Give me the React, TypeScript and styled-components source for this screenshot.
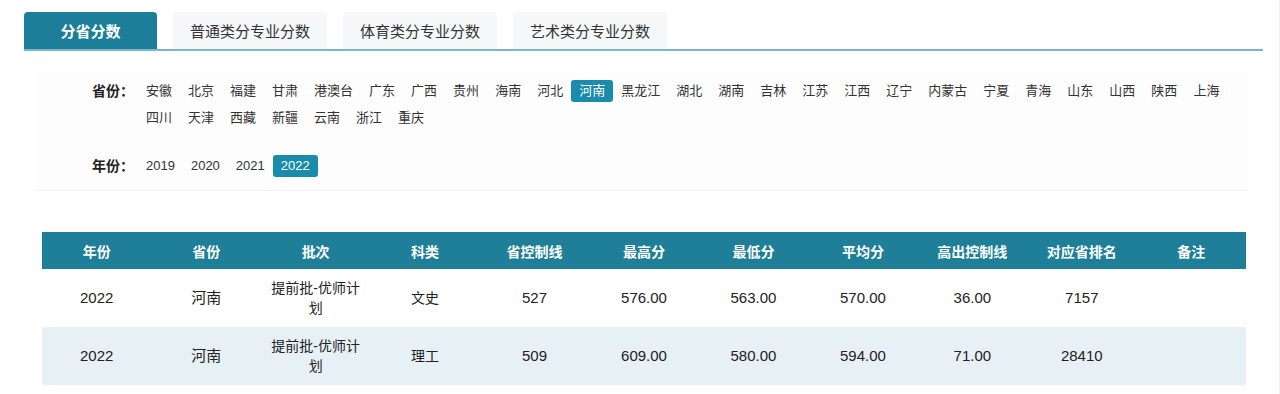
import { useState } from "react";
import styled, { createGlobalStyle } from "styled-components";

type ScoreRow = {
  year: string;
  province: string;
  batch: string;
  subject: string;
  controlLine: string;
  highest: string;
  lowest: string;
  average: string;
  aboveLine: string;
  rank: string;
  note: string;
};

const tabs = ["分省分数", "普通类分专业分数", "体育类分专业分数", "艺术类分专业分数"];

const provinces = [
  "安徽", "北京", "福建", "甘肃", "港澳台", "广东", "广西", "贵州", "海南", "河北",
  "河南", "黑龙江", "湖北", "湖南", "吉林", "江苏", "江西", "辽宁", "内蒙古", "宁夏",
  "青海", "山东", "山西", "陕西", "上海", "四川", "天津", "西藏", "新疆", "云南",
  "浙江", "重庆",
];

const years = ["2019", "2020", "2021", "2022"];

const headers = [
  "年份", "省份", "批次", "科类", "省控制线", "最高分", "最低分", "平均分",
  "高出控制线", "对应省排名", "备注",
];

const rows: ScoreRow[] = [
  {
    year: "2022", province: "河南", batch: "提前批-优师计划", subject: "文史",
    controlLine: "527", highest: "576.00", lowest: "563.00", average: "570.00",
    aboveLine: "36.00", rank: "7157", note: "",
  },
  {
    year: "2022", province: "河南", batch: "提前批-优师计划", subject: "理工",
    controlLine: "509", highest: "609.00", lowest: "580.00", average: "594.00",
    aboveLine: "71.00", rank: "28410", note: "",
  },
];

function App() {
  const [tab, setTab] = useState(0);
  const [province, setProvince] = useState("河南");
  const [year, setYear] = useState("2022");

  const shown = rows.filter((r) => r.province === province && r.year === year);

  return (
    <Page>
      <GlobalStyle />
      <TabBar>
        {tabs.map((t, i) => (
          <Tab key={t} $active={tab === i} onClick={() => setTab(i)}>
            {t}
          </Tab>
        ))}
      </TabBar>

      <FilterPanel>
        <FilterRow>
          <FilterLabel>省份：</FilterLabel>
          <Options>
            {provinces.map((p) => (
              <Option key={p} $active={province === p} onClick={() => setProvince(p)}>
                {p}
              </Option>
            ))}
          </Options>
        </FilterRow>
        <FilterRow $spaced>
          <FilterLabel>年份：</FilterLabel>
          <Options>
            {years.map((y) => (
              <Option key={y} $active={year === y} onClick={() => setYear(y)}>
                {y}
              </Option>
            ))}
          </Options>
        </FilterRow>
      </FilterPanel>

      <Table>
        <thead>
          <tr>
            {headers.map((h) => (
              <HeadCell key={h}>{h}</HeadCell>
            ))}
          </tr>
        </thead>
        <tbody>
          {shown.map((r, i) => (
            <BodyRow key={r.subject + i} $striped={i % 2 === 1}>
              <Cell>{r.year}</Cell>
              <Cell>{r.province}</Cell>
              <Cell $cjk>{r.batch}</Cell>
              <Cell $cjk>{r.subject}</Cell>
              <Cell>{r.controlLine}</Cell>
              <Cell>{r.highest}</Cell>
              <Cell>{r.lowest}</Cell>
              <Cell>{r.average}</Cell>
              <Cell>{r.aboveLine}</Cell>
              <Cell>{r.rank}</Cell>
              <Cell>{r.note}</Cell>
            </BodyRow>
          ))}
        </tbody>
      </Table>
    </Page>
  );
}

export default App;

const GlobalStyle = createGlobalStyle`
  body {
    margin: 0;
    background: #ffffff;
    font-family: "Liberation Sans", "Noto Sans CJK SC", sans-serif;
    color: #222;
  }
`;

const Page = styled.div`
  width: 1280px;
  height: 394px;
  box-sizing: border-box;
  padding: 12px 16px 0 24px;
  overflow: hidden;
  border-right: 1px solid #f1f2f4;
`;

const TabBar = styled.div`
  display: flex;
  gap: 16px;
  border-bottom: 2px solid #7ab8c8;
`;

const Tab = styled.div<{ $active?: boolean }>`
  min-width: 133px;
  height: 37px;
  box-sizing: border-box;
  padding: 0 17px;
  display: flex;
  align-items: center;
  justify-content: center;
  font-size: 15px;
  border-radius: 4px 4px 0 0;
  cursor: pointer;
  background: ${(p) => (p.$active ? "#1c7e98" : "#f6f7f9")};
  color: ${(p) => (p.$active ? "#ffffff" : "#333")};
  font-weight: ${(p) => (p.$active ? "bold" : "normal")};
`;

const FilterPanel = styled.div`
  margin: 19px 14px 0 12px;
  padding: 10px 0 13px;
  background: #fdfdfe;
  border-bottom: 1px solid #f1f2f4;
`;

const FilterRow = styled.div<{ $spaced?: boolean }>`
  display: flex;
  align-items: flex-start;
  margin-top: ${(p) => (p.$spaced ? "26px" : "0")};
`;

const FilterLabel = styled.div`
  width: 102px;
  flex-shrink: 0;
  box-sizing: border-box;
  padding-right: 4px;
  text-align: right;
  font-size: 14px;
  line-height: 22px;
  font-weight: bold;
  color: #222;
`;

const Options = styled.div`
  display: flex;
  flex-wrap: wrap;
  row-gap: 5px;
  flex: 1;
`;

const Option = styled.span<{ $active?: boolean }>`
  height: 22px;
  line-height: 22px;
  padding: 0 8px;
  font-size: 13px;
  border-radius: 3px;
  cursor: pointer;
  background: ${(p) => (p.$active ? "#1a8bab" : "transparent")};
  color: ${(p) => (p.$active ? "#ffffff" : "#333")};
`;

const Table = styled.table`
  margin: 41px 0 0 18px;
  width: 1204px;
  border-collapse: collapse;
  table-layout: fixed;
`;

const HeadCell = styled.th`
  height: 37px;
  padding: 0;
  background: #1f7f98;
  color: #ffffff;
  font-size: 14px;
  font-weight: bold;
  text-align: center;
`;

const BodyRow = styled.tr<{ $striped?: boolean }>`
  height: 58px;
  background: ${(p) => (p.$striped ? "#e6f0f5" : "#ffffff")};
`;

const Cell = styled.td<{ $cjk?: boolean }>`
  padding: 0 8px;
  text-align: center;
  font-size: ${(p) => (p.$cjk ? "14px" : "15px")};
  line-height: 20px;
  color: #222;
`;
